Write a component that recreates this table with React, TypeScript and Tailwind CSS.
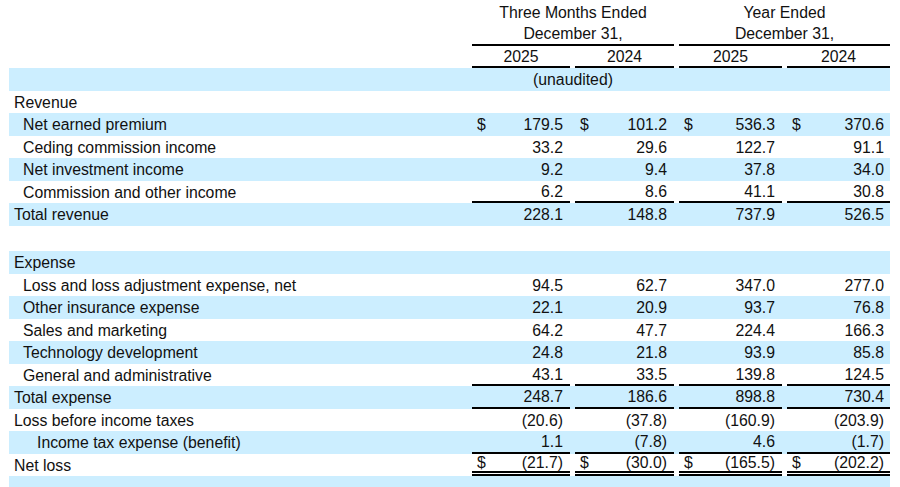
import React from 'react';

type Line = 'none' | 'single' | 'double';

interface Row {
  label: string;
  indent: 0 | 1 | 2;
  vals?: string[];
  dollar?: boolean;
  band: boolean;
  line?: Line;
}

const rows: Row[] = [
  { label: 'Revenue', indent: 0, band: false },
  { label: 'Net earned premium', indent: 1, vals: ['179.5', '101.2', '536.3', '370.6'], dollar: true, band: true },
  { label: 'Ceding commission income', indent: 1, vals: ['33.2', '29.6', '122.7', '91.1'], band: false },
  { label: 'Net investment income', indent: 1, vals: ['9.2', '9.4', '37.8', '34.0'], band: true },
  { label: 'Commission and other income', indent: 1, vals: ['6.2', '8.6', '41.1', '30.8'], band: false, line: 'single' },
  { label: 'Total revenue', indent: 0, vals: ['228.1', '148.8', '737.9', '526.5'], band: true },
];

const expenseRows: Row[] = [
  { label: 'Expense', indent: 0, band: true },
  { label: 'Loss and loss adjustment expense, net', indent: 1, vals: ['94.5', '62.7', '347.0', '277.0'], band: false },
  { label: 'Other insurance expense', indent: 1, vals: ['22.1', '20.9', '93.7', '76.8'], band: true },
  { label: 'Sales and marketing', indent: 1, vals: ['64.2', '47.7', '224.4', '166.3'], band: false },
  { label: 'Technology development', indent: 1, vals: ['24.8', '21.8', '93.9', '85.8'], band: true },
  { label: 'General and administrative', indent: 1, vals: ['43.1', '33.5', '139.8', '124.5'], band: false, line: 'single' },
  { label: 'Total expense', indent: 0, vals: ['248.7', '186.6', '898.8', '730.4'], band: true, line: 'single' },
  { label: 'Loss before income taxes', indent: 0, vals: ['(20.6)', '(37.8)', '(160.9)', '(203.9)'], band: false },
  { label: 'Income tax expense (benefit)', indent: 2, vals: ['1.1', '(7.8)', '4.6', '(1.7)'], band: true, line: 'single' },
  { label: 'Net loss', indent: 0, vals: ['(21.7)', '(30.0)', '(165.5)', '(202.2)'], dollar: true, band: false, line: 'double' },
];

// widths of the four value columns, and the gap before each
const cellClass = ['w-[98px]', 'ml-[5px] w-[99px]', 'ml-[5px] w-[103px]', 'ml-[5px] w-[103px]'];
const padRight = ['pr-[7px]', 'pr-[7px]', 'pr-[7px]', 'pr-[6px]'];

const indentClass = (indent: number) => {
  switch (indent) {
    case 1:
      return 'pl-[14px]';
    case 2:
      return 'pl-[28px]';
    default:
      return 'pl-[5px]';
  }
};

const lineClass = (line?: Line) => {
  if (line === 'single') return 'border-b-2 border-black';
  if (line === 'double') return 'border-b-[5px] border-double border-black';
  return '';
};

const DataRow: React.FC<{ row: Row }> = ({ row }) => (
  <div className={`flex h-[22.5px] pt-[2px] ${row.band ? 'bg-[#cceeff]' : ''}`}>
    <div className={`flex w-[463px] items-center ${indentClass(row.indent)}`}>{row.label}</div>
    {row.vals &&
      row.vals.map((v, i) => (
        <div key={i} className={`flex items-center justify-between pl-[5px] ${cellClass[i]} ${padRight[i]} ${lineClass(row.line)}`}>
          <span>{row.dollar ? '$' : ''}</span>
          <span>{v}</span>
        </div>
      ))}
  </div>
);

const App: React.FC = () => {
  return (
    <div
      className="h-[487px] w-[900px] overflow-hidden bg-white text-[15.8px] leading-none text-[#111]"
      style={{ fontFamily: '"Liberation Sans", Arial, sans-serif' }}
    >
      <div className="ml-[9px] w-[881px] pt-[0.5px]">
        {/* Column headers */}
        <div className="flex h-[22.5px] pt-[2px]">
          <div className="w-[463px]" />
          <div className="flex w-[202px] items-center justify-center">Three Months Ended</div>
          <div className="ml-[5px] flex w-[211px] items-center justify-center">Year Ended</div>
        </div>
        <div className="flex h-[22.5px] pt-[2px]">
          <div className="w-[463px]" />
          <div className="flex w-[202px] items-center justify-center border-b-2 border-black">December 31,</div>
          <div className="ml-[5px] flex w-[211px] items-center justify-center border-b-2 border-black">December 31,</div>
        </div>
        <div className="flex h-[22.5px] pt-[2px]">
          <div className="w-[463px]" />
          {['2025', '2024', '2025', '2024'].map((y, i) => (
            <div key={i} className={`flex items-center justify-center border-b-2 border-black ${cellClass[i]}`}>
              {y}
            </div>
          ))}
        </div>
        <div className="flex h-[22.5px] bg-[#cceeff] pt-[2px]">
          <div className="w-[463px]" />
          <div className="flex w-[202px] items-center justify-center">(unaudited)</div>
        </div>

        {rows.map((r) => (
          <DataRow key={r.label} row={r} />
        ))}

        <div className="h-[25.5px]" />

        {expenseRows.map((r) => (
          <DataRow key={r.label} row={r} />
        ))}

        <div className="h-[22.5px] bg-[#cceeff]" />
      </div>
    </div>
  );
};

export default App;
